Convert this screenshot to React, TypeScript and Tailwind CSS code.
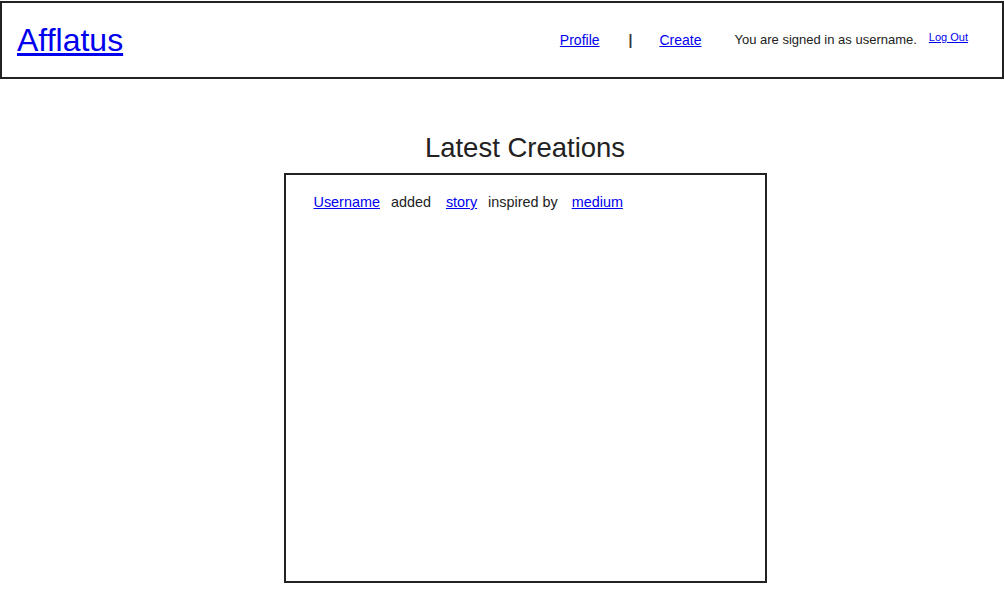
export default function App() {
  return (
    <div className="min-h-screen bg-white text-[#222] font-['Liberation_Sans',Arial,sans-serif]">
      {/* Header */}
      <header className="mt-px h-[78px] border-2 border-[#222] flex items-center justify-between">
        <a href="#" className="ml-[15px] text-[32px] leading-none text-[#0000ee] underline">
          Afflatus
        </a>
        <nav className="flex items-center mr-[34px] text-sm">
          <a href="#" className="text-[#0000ee] underline">Profile</a>
          <span className="ml-[29px] font-bold text-[#333]">|</span>
          <a href="#" className="ml-[27px] text-[#0000ee] underline">Create</a>
          <span className="ml-[33px] text-[13px]">You are signed in as username.</span>
          <a href="#" className="ml-[12px] -mt-[4px] text-[11px] text-[#0000ee] underline">Log Out</a>
        </nav>
      </header>

      {/* Feed */}
      <main className="flex flex-col items-center pl-[46px]">
        <h2 className="mt-[52px] text-[27.5px] leading-[34px] text-[#222]">Latest Creations</h2>
        <div className="mt-[8px] w-[483px] h-[410px] border-2 border-[#222] pl-[28px] pr-[27px] pt-[17px]">
          <div className="flex items-baseline text-[14.4px]">
            <a href="#" className="text-[#0000ee] underline">Username</a>
            <span className="ml-[11px]">added</span>
            <a href="#" className="ml-[15px] text-[#0000ee] underline">story</a>
            <span className="ml-[11px]">inspired by</span>
            <a href="#" className="ml-[14px] text-[#0000ee] underline">medium</a>
          </div>
        </div>
      </main>
    </div>
  );
}
